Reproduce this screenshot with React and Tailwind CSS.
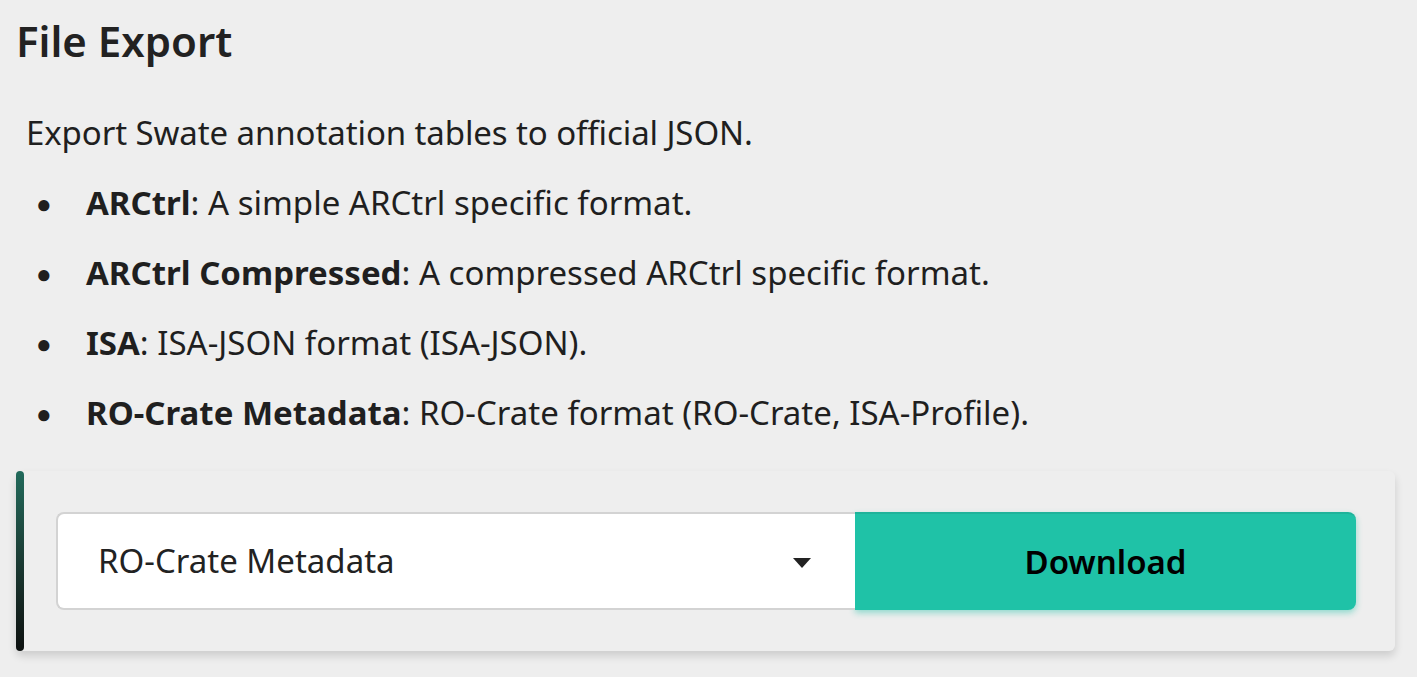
import React, { useState } from "react";

const FORMATS = [
  { name: "ARCtrl", desc: "A simple ARCtrl specific format." },
  { name: "ARCtrl Compressed", desc: "A compressed ARCtrl specific format." },
  { name: "ISA", desc: "ISA-JSON format (ISA-JSON)." },
  { name: "RO-Crate Metadata", desc: "RO-Crate format (RO-Crate, ISA-Profile)." },
];

export default function App() {
  const [format, setFormat] = useState("RO-Crate Metadata");

  return (
    <div
      className="min-h-screen w-full bg-[#eeeeee] text-[#1f1f1f] overflow-hidden"
      style={{ fontFamily: '"Noto Sans", "Open Sans", sans-serif' }}
    >
      <div className="pl-[16px] pr-[22px]">
        <h1 className="h-[80px] flex items-center text-[42px] font-semibold text-[#222]">
          File Export
        </h1>

        <div className="pl-[10px] text-[33px] leading-[40px]">
          <p className="mt-[33px] tracking-[-0.1px]">Export Swate annotation tables to official JSON.</p>
          <ul className="mt-[30px] flex flex-col gap-[30px]">
            {FORMATS.map((f) => (
              <li key={f.name} className="flex items-center">
                <span className="w-[60px] pl-[10px] text-[26px]">●</span>
                <span>
                  <b className="font-bold">{f.name}</b>: {f.desc}
                </span>
              </li>
            ))}
          </ul>
        </div>

        <div className="mt-[38px] flex rounded-[6px] shadow-[0_5px_8px_rgba(0,0,0,0.14)]">
          <div className="w-[9px] rounded-full bg-gradient-to-b from-[#216a5b] to-[#0d1110]" />
          <div className="flex-1 flex py-[41px] pl-[32px] pr-[39px]">
            <div className="relative w-[799px] h-[98px] bg-white border-2 border-[#d3d3d3] border-r-0 rounded-l-[8px] flex items-center">
              <span className="pl-[40px] text-[33px] text-[#222]">{format}</span>
              <svg className="absolute right-[44px] top-[44px]" width="18" height="10" viewBox="0 0 18 10">
                <path d="M0 0 H18 L9 10 Z" fill="#222" />
              </svg>
            </div>
            <button
              onClick={() => setFormat(format)}
              className="w-[501px] h-[98px] bg-[#1fc2a7] border-t-2 border-[#1db39a] rounded-r-[8px] text-[33px] font-semibold text-black shadow-[0_3px_6px_rgba(31,194,167,0.45)]"
            >
              Download
            </button>
          </div>
        </div>
      </div>
    </div>
  );
}
